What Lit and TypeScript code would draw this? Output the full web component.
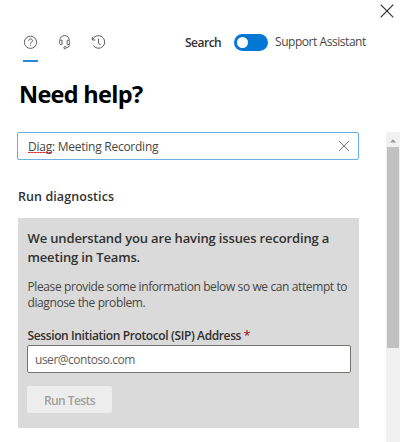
import { LitElement, html, css } from "lit";
import { customElement } from "lit/decorators.js";

@customElement("app-root")
export class AppRoot extends LitElement {
  static styles = css`
    :host {
      display: block;
      width: 400px;
      height: 442px;
      overflow: hidden;
      background: #fff;
      color: #323130;
      font-family: "Open Sans", "Noto Sans", sans-serif;
      font-size: 12px;
      line-height: 16px;
    }
    * { box-sizing: border-box; }
    svg { display: block; flex: none; fill: none; }
    p, h1, h2, h3 { margin: 0; white-space: nowrap; }
    .top { display: flex; justify-content: flex-end; height: 32px; padding: 4px 6.5px 0 0; }
    .bar { display: flex; height: 40px; padding-left: 23px; }
    .tabs { display: flex; gap: 18px; width: 162px; }
    .tab { width: 16px; height: 30px; padding-top: 2px; }
    .tab.on { border-bottom: 2px solid #2b88d8; width: 15px; margin: 0 1px 0 0; }
    .mode { display: flex; height: 20px; align-items: center; }
    .search { width: 49px; font-weight: 600; letter-spacing: -0.5px; padding-top: 1px; }
    .assist { color: #484644; letter-spacing: -0.45px; margin-left: 7px; }
    .toggle { width: 34px; height: 17px; border-radius: 9px; background: #0078d4; padding: 3px; }
    .knob { width: 11px; height: 11px; border-radius: 50%; background: #fff; }
    h1 { color: #000; font-size: 23.5px; line-height: 32px; font-weight: 700; letter-spacing: -0.7px; padding: 6px 0 0 19px; height: 60px; }
    .body { display: flex; justify-content: space-between; height: 310px; }
    .content { width: 342px; margin-left: 17px; }
    .box { display: flex; align-items: center; justify-content: space-between; height: 28px; border: 1px solid #69afe5; border-radius: 2px; background: #fff; padding: 0 8px 0 10px; }
    .query { color: #484644; letter-spacing: -0.25px; padding-top: 1px; }
    .typo { background: repeating-linear-gradient(90deg, #e8262d 0 2px, #f4787c 2px 3px) 0 calc(100% - 2px) / 100% 1px no-repeat; }
    h2 { font-size: 12.5px; font-weight: 600; line-height: 18px; padding-left: 1px; margin: 28px 0 12px; letter-spacing: 0.08px; }
    .panel { height: 210px; margin-left: 1px; background: #dadada; padding: 11px 8px 0 9px; }
    h3 { font-size: 13px; font-weight: 600; line-height: 19px; letter-spacing: -0.14px; padding-left: 0.5px; }
    .info { color: #484644; line-height: 16px; margin-top: 12px; letter-spacing: -0.39px; padding-left: 0.5px; }
    .label { font-weight: 600; margin-top: 17px; letter-spacing: -0.38px; padding-left: 0.5px; }
    .req { color: #a4262c; }
    .field { height: 28px; border: 1px solid #76736f; border-radius: 2px; background: #fff; padding: 6px 7px; margin-top: 1px; color: #605e5c; letter-spacing: -0.48px; white-space: nowrap; }
    .run { display: block; width: 85px; height: 27px; margin-top: 13px; padding: 0; border: 0; border-radius: 2px; background: #ededed; color: #a19f9d; font: 600 12px/29px "Open Sans", "Noto Sans", sans-serif; letter-spacing: -0.55px; }
    .scroll { width: 14px; height: 310px; background: #f1f1f1; padding: 6px 1px 0; }
    .thumb { height: 201px; margin-top: 4px; background: #c1c1c1; }
  `;

  render() {
    return html`
      <div class="top">
        <svg width="14" height="14" stroke="#323130" stroke-width="1.2"><path d="M.7.7 13.3 13.3M13.3.7.7 13.3" /></svg>
      </div>
      <div class="bar">
        <div class="tabs">
          <div class="tab on">
            <svg width="15" height="16" stroke="#605e5c" stroke-width="1">
              <circle cx="7.5" cy="8.3" r="6.1" />
              <path d="M5.6 6.8C5.6 4.4 9.5 4.4 9.5 6.7 9.5 8.1 7.6 8.1 7.6 9.7M7.6 10.7V11.8" />
            </svg>
          </div>
          <div class="tab">
            <svg width="16" height="16" stroke="#605e5c" stroke-width="1">
              <path d="M2.8 7V6.4C2.8 0 12.3 0 12.3 6.4V7M5 6.2V10.6H4.2C1.8 10.6 1.8 6.2 4.2 6.2ZM10.2 6.2V10.6H11C13.3 10.6 13.3 6.2 11 6.2ZM12.2 10V11.5Q12.2 13.6 9.2 13.6" />
              <circle cx="8" cy="13.7" r="1.2" />
            </svg>
          </div>
          <div class="tab">
            <svg width="16" height="16" stroke="#605e5c" stroke-width="1">
              <path d="M1.3 3V6H4.4M1.5 5.8A6.3 6.3 0 1 1 2.2 11.5M7.5 4.6V9L9.6 11.1" />
            </svg>
          </div>
        </div>
        <div class="mode">
          <span class="search">Search</span>
          <div class="toggle"><div class="knob"></div></div>
          <span class="assist">Support Assistant</span>
        </div>
      </div>
      <h1>Need help?</h1>
      <div class="body">
        <div class="content">
          <div class="box">
            <span class="query"><span class="typo">Diag</span>: Meeting Recording</span>
            <svg width="12" height="12" stroke="#797775" stroke-width="1"><path d="M1 1 11 11M11 1 1 11" /></svg>
          </div>
          <h2>Run diagnostics</h2>
          <div class="panel">
            <h3>We understand you are having issues recording a<br />meeting in Teams.</h3>
            <p class="info">Please provide some information below so we can attempt to<br />diagnose the problem.</p>
            <p class="label">Session Initiation Protocol (SIP) Address <span class="req">*</span></p>
            <div class="field">user@contoso.com</div>
            <button class="run" disabled>Run Tests</button>
          </div>
        </div>
        <div class="scroll">
          <svg width="12" height="5"><path d="M3 4.5 6 1.2 9 4.5Z" fill="#999" /></svg>
          <div class="thumb"></div>
        </div>
      </div>
    `;
  }
}
